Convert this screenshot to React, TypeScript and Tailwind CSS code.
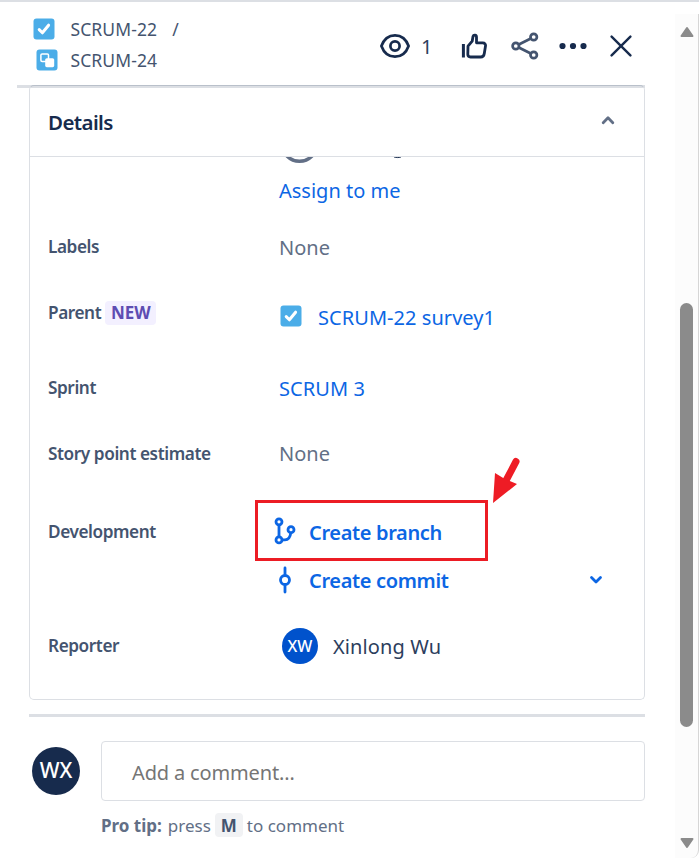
import type { ReactNode } from 'react';

function TaskIcon() {
  return (
    <svg width="22" height="22" viewBox="0 0 22 22" className="shrink-0">
      <rect x="0.5" y="0.5" width="21" height="21" rx="3" fill="#4BADE8" />
      <path d="M6.200 11.600l3.200 3.200L15.600 7.200" fill="none" stroke="#fff" strokeWidth="3" strokeLinecap="round" strokeLinejoin="round" />
    </svg>
  );
}

function SubtaskIcon() {
  return (
    <svg width="22" height="22" viewBox="0 0 22 22" className="shrink-0">
      <rect x="0.5" y="0.5" width="21" height="21" rx="3" fill="#4BADE8" />
      <rect x="4.900" y="4.900" width="7.600" height="7.600" rx="1.200" fill="none" stroke="#fff" strokeWidth="1.500" />
      <rect x="9.200" y="9.200" width="9" height="9" rx="1.600" fill="#fff" />
    </svg>
  );
}

function Row({ label, height, children }: { label?: ReactNode; height: string; children: ReactNode }) {
  return (
    <div className={`flex items-center ${height}`}>
      <div className="flex w-[231px] shrink-0 items-center text-[17.2px] font-semibold tracking-[-0.42px] text-[#44546F]">{label}</div>
      {children}
    </div>
  );
}

function Header() {
  return (
    <header className="flex h-[83px] shrink-0 pl-[33px]">
      <div className="w-[347px] pt-4 text-[17.5px] leading-[22px] text-[#44546F]">
        <div className="flex items-center">
          <TaskIcon />
          <span className="ml-[15.5px] tracking-[0.1px]">SCRUM-22</span>
          <span className="ml-[15px]">/</span>
        </div>
        <div className="mt-[9px] flex items-center pl-[3px]">
          <SubtaskIcon />
          <span className="ml-[12.5px] tracking-[0.1px]">SCRUM-24</span>
        </div>
      </div>
      <div className="flex h-[88px] items-center text-[#172B4D]">
        <svg width="30" height="26" viewBox="0 0 30 26" fill="none" stroke="currentColor" strokeWidth="2.700">
          <path d="M1.400 13C4 5.800 9 2.300 15 2.300S26 5.800 28.600 13C26 20.200 21 23.700 15 23.700S4 20.200 1.400 13Z" />
          <circle cx="15" cy="13" r="4.600" />
        </svg>
        <span className="ml-[11px] w-[13px] pt-[2px] text-[20px] text-[#2C3E5D]">1</span>
        <svg width="26" height="26" viewBox="0 0 26 26" className="ml-[27px]" fill="none" stroke="currentColor" strokeWidth="2.800" strokeLinejoin="round">
          <path d="M2.400 11v13.500" strokeWidth="3" />
          <path d="M7 13.200L11.200 8.200L12 3.500C12.600 1.500 15.500 1.600 15.500 4.200V9.800H21.700C23.800 9.800 24.800 11.300 24.500 13L23.300 20.500C23 22.700 21.700 24 19.700 24H9.500C7.800 24 6.800 23 6.800 21.300Z" />
        </svg>
        <svg width="28" height="28" viewBox="0 0 28 28" className="ml-[24px]" fill="none" stroke="#44546F" strokeWidth="2.700">
          <circle cx="4.800" cy="14" r="3.200" />
          <circle cx="22.700" cy="5" r="3.200" />
          <circle cx="22.700" cy="23" r="3.200" />
          <path d="M7.800 12.500L19.800 6.500M7.800 15.500L19.800 21.500" />
        </svg>
        <svg width="28" height="8" viewBox="0 0 28 8" className="ml-5" fill="currentColor">
          <circle cx="3.500" cy="4" r="3.100" />
          <circle cx="14" cy="4" r="3.100" />
          <circle cx="24.500" cy="4" r="3.100" />
        </svg>
        <svg width="22" height="22" viewBox="0 0 22 22" className="ml-[23px]" fill="none" stroke="currentColor" strokeWidth="2.400" strokeLinecap="round">
          <path d="M1.600 1.600L20.400 20.400M20.400 1.600L1.600 20.400" />
        </svg>
      </div>
    </header>
  );
}

function Details() {
  return (
    <section className="relative ml-[29px] h-[615px] w-[616px] shrink-0 rounded-[5px] border border-[#DCDFE4] border-t-[#B9C0CA]">
      <div className="absolute -top-px -left-[13px] -z-10 h-[3px] w-[628px] bg-[#DCDFE4]" />
      <div className="flex h-[71px] items-center justify-between border-b border-[#DCDFE4] pr-[29px] pl-[18px]">
        <h2 className="pt-[2px] text-[20.5px] font-semibold tracking-[-0.6px] text-[#172B4D]">Details</h2>
        <svg width="14" height="10" viewBox="0 0 14 10" className="mb-[3px]" fill="none" stroke="#626F86" strokeWidth="2.800" strokeLinecap="round" strokeLinejoin="round">
          <path d="M2.200 7.700L7 2.800L11.800 7.700" />
        </svg>
      </div>
      <div className="pl-[18px] text-[20px] text-[#0C66E4]">
        <div className="flex h-[61px] flex-col overflow-hidden pl-[231px]">
          <div className="flex h-[7px] shrink-0 items-end">
            <svg width="130" height="7" viewBox="0 0 130 7" fill="none">
              <circle cx="20.500" cy="-13" r="17.300" stroke="#626F86" strokeWidth="3.500" />
              <path d="M115 0q4 1.200 7 0" stroke="#172B4D" strokeWidth="1" />
            </svg>
          </div>
          <span className="mt-[12px] leading-[30px]">Assign to me</span>
        </div>
        <Row label="Labels" height="h-[58px]">
          <span className="pt-px text-[#626F86]">None</span>
        </Row>
        <Row
          height="h-[76px]"
          label={
            <div className="flex items-center pb-[2px]">
              Parent
              <span className="ml-1 flex h-6 w-[51px] items-center justify-center rounded-[4px] bg-[#F3F0FF] text-[17px] font-bold tracking-[-0.1px] text-[#5E4DB2]">NEW</span>
            </div>
          }
        >
          <div className="flex items-center pt-[7px]">
            <div className="pl-px pb-[3px]"><TaskIcon /></div>
            <span className="ml-4 tracking-[0.05px]">SCRUM-22 survey1</span>
          </div>
        </Row>
        <Row label="Sprint" height="h-[72px]">
          <span className="pt-px tracking-[0.1px]">SCRUM 3</span>
        </Row>
        <Row label="Story point estimate" height="h-[60px]">
          <span className="text-[#626F86]">None</span>
        </Row>
        <div className="flex h-[124px]">
          <div className="w-[207px] shrink-0 pt-[35px] text-[17.2px] leading-[26px] font-semibold tracking-[-0.42px] text-[#44546F]">Development</div>
          <div className="w-[348px] pt-4 font-semibold tracking-[-0.35px]">
            <div className="flex h-[61px] w-[233px] items-center border-[3px] border-[#EC1C24] pl-4">
              <svg width="22" height="28" viewBox="0 0 22 28" fill="none" stroke="currentColor" strokeWidth="2.800">
                <circle cx="5" cy="4.800" r="3" />
                <circle cx="5" cy="22.900" r="3" />
                <circle cx="17" cy="12.700" r="3" />
                <path d="M5 7.800V19.900M8 22.900H11Q16 22.900 16.800 15.700" />
              </svg>
              <span className="ml-[13px] pt-1">Create branch</span>
            </div>
            <div className="flex h-[37px] items-center pl-[22px]">
              <svg width="16" height="28" viewBox="0 0 16 28" fill="none" stroke="currentColor" strokeWidth="2.800" strokeLinecap="round">
                <circle cx="8" cy="14" r="4.500" />
                <path d="M8 2V9M8 19V26" />
              </svg>
              <span className="ml-4 pt-[2px]">Create commit</span>
              <svg width="14" height="10" viewBox="0 0 14 10" className="ml-auto" fill="none" stroke="currentColor" strokeWidth="2.800" strokeLinecap="round" strokeLinejoin="round">
                <path d="M2.500 2.500L7 7L11.500 2.500" />
              </svg>
            </div>
          </div>
        </div>
        <Row label="Reporter" height="h-[76px]">
          <div className="ml-[3px] flex size-9 items-center justify-center rounded-full bg-[#0052CC] text-[16px] font-medium text-white">XW</div>
          <span className="ml-[15px] pt-px tracking-[0.1px] text-[#2C3E5D]">Xinlong Wu</span>
        </Row>
      </div>
      <svg width="30" height="50" viewBox="0 0 30 50" className="absolute top-[368px] left-[462px]">
        <path d="M24 7.500L13.500 27.500" stroke="#EE1C25" strokeWidth="7" strokeLinecap="round" />
        <path d="M3 19L12 24.500L25 30L1 49Z" fill="#EE1C25" />
      </svg>
    </section>
  );
}

function CommentBar() {
  return (
    <footer className="ml-[29px] mt-[14px] w-[616px] border-t-[3px] border-[#DCDFE4]">
      <div className="mt-6 flex pl-[3px]">
        <div className="mt-[6px] flex size-12 items-center justify-center rounded-full bg-[#172B4D] text-[21px] font-medium text-white">WX</div>
        <div className="ml-[21px] w-[544px]">
          <div className="flex h-[60px] items-center rounded-[4px] border border-[#DCDFE4] pt-[3px] pl-[30px] text-[20px] tracking-[-0.15px] text-[#757575]">Add a comment…</div>
          <div className="mt-3 flex h-6 items-center text-[17px] text-[#626F86]">
            <strong className="pt-[2px] font-bold">Pro tip:</strong>
            <span className="ml-[6px] pt-[2px]">press</span>
            <kbd className="mx-1 flex h-6 w-7 items-center justify-center rounded-[4px] bg-[#F1F2F4] pt-px font-['Noto_Sans'] text-[17px] font-bold text-[#44546F]">M</kbd>
            <span className="pt-[2px]">to comment</span>
          </div>
        </div>
      </div>
    </footer>
  );
}

function Scrollbar() {
  return (
    <aside className="mt-3 flex h-[844px] w-[24px] shrink-0 flex-col items-center rounded-br-[8px] border-r border-[#D6D6D6] bg-[#FCFCFC]">
      <svg width="14" height="12" viewBox="0 0 14 12" className="mt-[12px] shrink-0">
        <path d="M7 2L12.500 10H1.500Z" fill="#8B8B8B" stroke="#8B8B8B" strokeWidth="2" strokeLinejoin="round" />
      </svg>
      <div className="mt-[265px] h-[424px] w-[13px] shrink-0 rounded-full bg-[#8B8B8B]" />
      <svg width="14" height="12" viewBox="0 0 14 12" className="mt-[110px] shrink-0">
        <path d="M1.500 2H12.500L7 10Z" fill="#8B8B8B" stroke="#8B8B8B" strokeWidth="2" strokeLinejoin="round" />
      </svg>
    </aside>
  );
}

export default function App() {
  return (
    <div className="relative z-0 flex h-[858px] w-[699px] overflow-hidden border-t-2 border-[#DCDFE4] bg-white font-['Noto_Sans','Open_Sans',sans-serif]">
      <main className="flex w-[675px] shrink-0 flex-col">
        <Header />
        <Details />
        <CommentBar />
      </main>
      <Scrollbar />
    </div>
  );
}
